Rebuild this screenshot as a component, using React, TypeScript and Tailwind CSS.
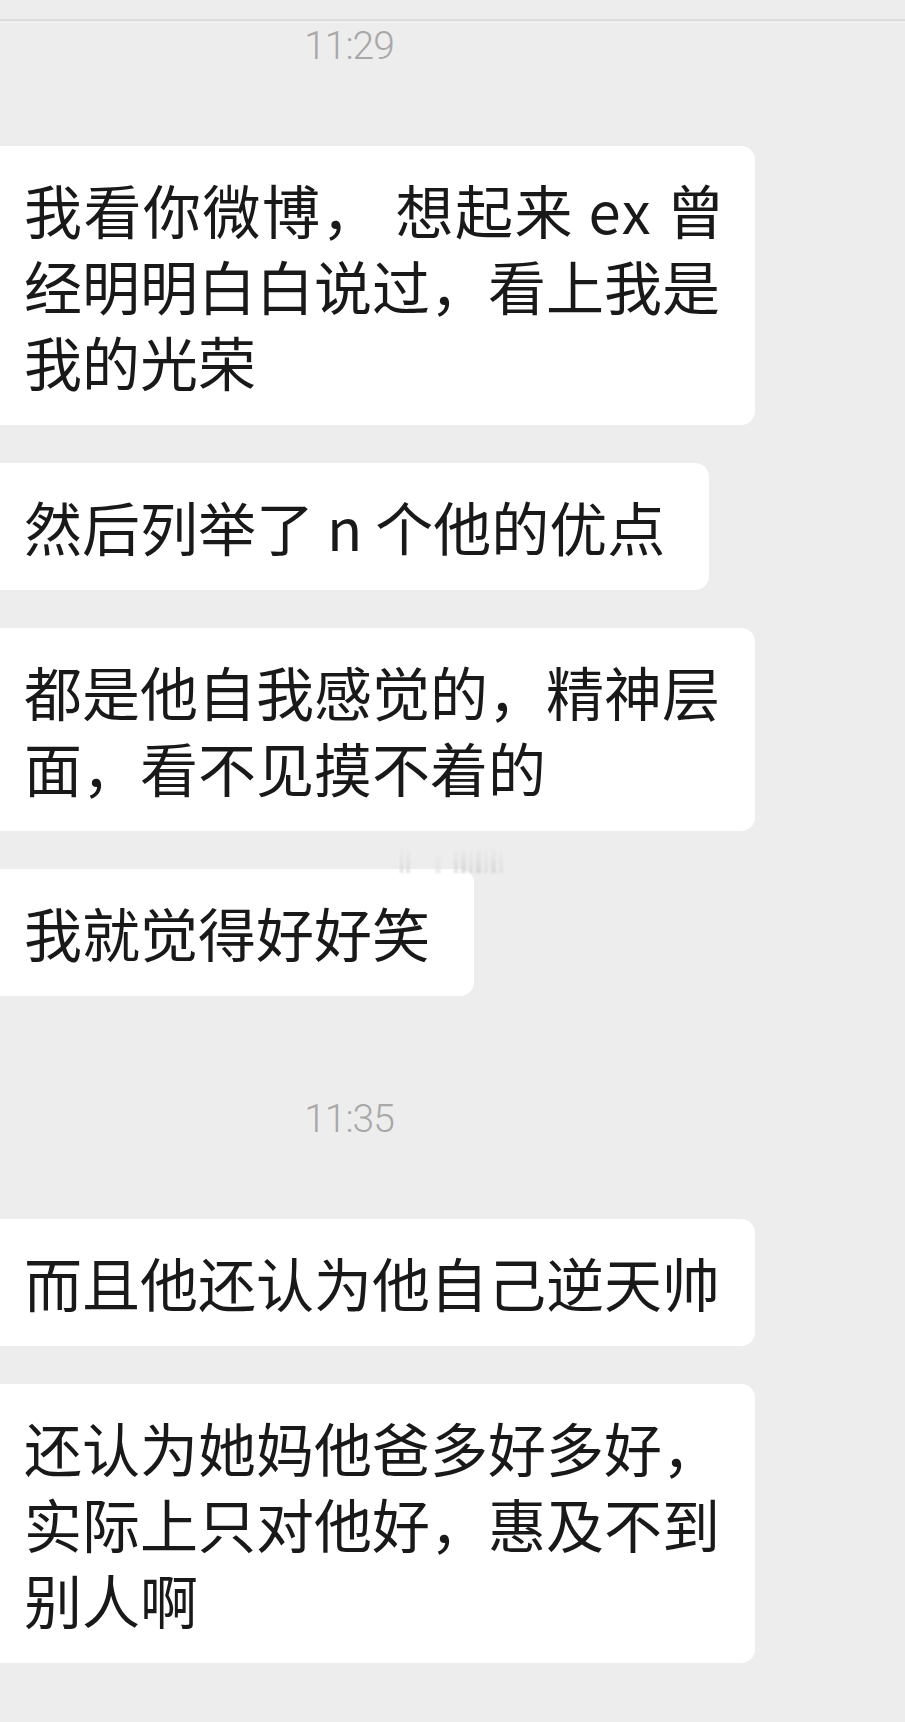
import React from "react";

const cjk = {
  fontFamily: '"Noto Sans CJK SC", "Noto Sans", sans-serif',
};

function Bubble({
  lines,
  full,
  firstLineClass,
  children,
}: {
  lines: string[];
  full?: boolean;
  firstLineClass?: string;
  children?: React.ReactNode;
}) {
  return (
    <div className="relative flex">
      <div
        className={
          "rounded-r-[14px] bg-white pl-[24px] pt-[25px] pb-[26px] text-[58px] leading-[76px] text-[#191919] whitespace-pre " +
          (full ? "w-[755px] pr-[20px]" : "pr-[44px]")
        }
        style={cjk}
      >
        {lines.map((l, i) => (
          <div key={i} className={i === 0 ? firstLineClass : undefined}>
            {l}
          </div>
        ))}
      </div>
      {children}
    </div>
  );
}

function Time({ t, className }: { t: string; className: string }) {
  return (
    <div
      className={
        "w-[698px] text-center text-[39px] leading-[40px] font-light tracking-[-1px] text-[#a8a8a8] " +
        className
      }
      style={{ fontFamily: 'Roboto, "Liberation Sans", sans-serif' }}
    >
      {t}
    </div>
  );
}

export default function App() {
  return (
    <div className="w-[905px] min-h-[1722px] overflow-hidden bg-[#ededed]">
      <div className="h-[19px]" />
      <div className="h-[2px] bg-[#dedede]" />
      <div className="h-[1px]" />
      <div className="h-[1px] bg-[#f4f4f4]" />
      <Time t="11:29" className="mt-[3px]" />
      <div className="mt-[80px] flex flex-col gap-[38px]">
        <Bubble
          full
          firstLineClass="tracking-[1.5px]"
          lines={["我看你微博， 想起来 ex 曾", "经明明白白说过，看上我是", "我的光荣"]}
        />
        <Bubble lines={["然后列举了 n 个他的优点"]} />
        <Bubble full lines={["都是他自我感觉的，精神层", "面，看不见摸不着的"]} />
        <Bubble lines={["我就觉得好好笑"]}>
          <div className="pointer-events-none absolute left-[400px] top-[-24px] flex h-[28px] w-[110px] items-end gap-[3px] opacity-70 blur-[1px]">
            <div className="h-[26px] w-[3px] bg-gradient-to-b from-transparent to-[#cfcfcf]" />
            <div className="h-[26px] w-[4px] bg-gradient-to-b from-transparent to-[#d4d4d4]" />
            <div className="ml-[22px] h-[22px] w-[6px] bg-gradient-to-b from-transparent to-[#e2e2e2]" />
            <div className="ml-[10px] h-[26px] w-[4px] bg-gradient-to-b from-transparent to-[#d2d2d2]" />
            <div className="h-[26px] w-[5px] bg-gradient-to-b from-transparent to-[#cccccc]" />
            <div className="h-[26px] w-[4px] bg-gradient-to-b from-transparent to-[#d6d6d6]" />
            <div className="h-[26px] w-[5px] bg-gradient-to-b from-transparent to-[#cdcdcd]" />
            <div className="h-[26px] w-[4px] bg-gradient-to-b from-transparent to-[#d8d8d8]" />
            <div className="h-[26px] w-[5px] bg-gradient-to-b from-transparent to-[#d0d0d0]" />
            <div className="h-[26px] w-[4px] bg-gradient-to-b from-transparent to-[#dadada]" />
          </div>
        </Bubble>
      </div>
      <Time t="11:35" className="mt-[103px]" />
      <div className="mt-[80px] flex flex-col gap-[38px]">
        <Bubble full lines={["而且他还认为他自己逆天帅"]} />
        <Bubble
          full
          lines={["还认为她妈他爸多好多好，", "实际上只对他好，惠及不到", "别人啊"]}
        />
      </div>
    </div>
  );
}
